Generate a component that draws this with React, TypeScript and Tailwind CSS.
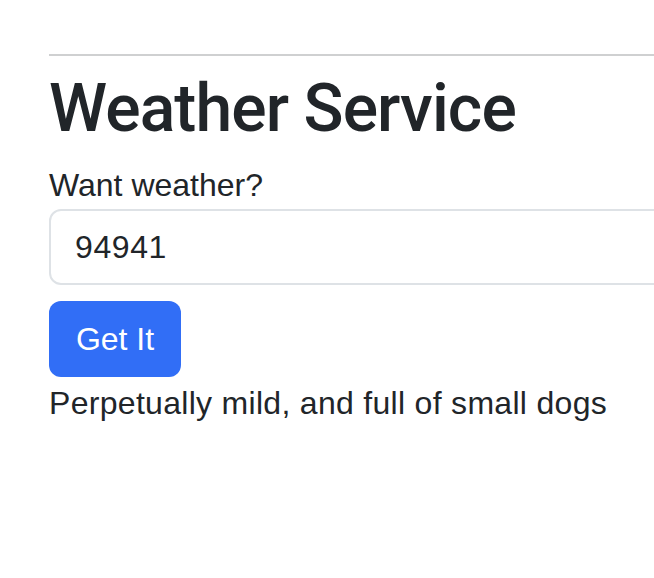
import { useState } from 'react';

export default function App() {
  const [zip, setZip] = useState('94941');

  return (
    <div className="min-h-screen w-full overflow-hidden bg-white pl-[49px] pt-[54px] text-[#212529] font-['Liberation_Sans',Arial,sans-serif]">
      <div className="w-[680px]">
        {/* divider */}
        <hr className="m-0 h-0 border-0 border-t-2 border-[#cfd0d1]" />

        <h1 className="mt-[13px] text-[66px] leading-[79px] font-medium tracking-[-0.9px] font-['Roboto',sans-serif]">
          Weather Service
        </h1>

        <label htmlFor="zip" className="mt-[13px] block text-[32px] leading-[48px]">
          Want weather?
        </label>
        <input
          id="zip"
          value={zip}
          onChange={(e) => setZip(e.target.value)}
          className="block h-[76px] w-full rounded-[12px] border-2 border-[#dee2e6] bg-white px-[24px] text-[32px] leading-[48px] tracking-[0.6px] text-[#212529] outline-none"
        />

        <button className="mt-4 block h-[76px] w-[132px] rounded-[12px] border-2 border-transparent bg-[#316ef6] text-[32px] leading-[48px] text-white">
          Get It
        </button>

        <p className="mt-[2px] text-[32px] leading-[48px] tracking-[0.3px]">
          Perpetually mild, and full of small dogs
        </p>
      </div>
    </div>
  );
}
